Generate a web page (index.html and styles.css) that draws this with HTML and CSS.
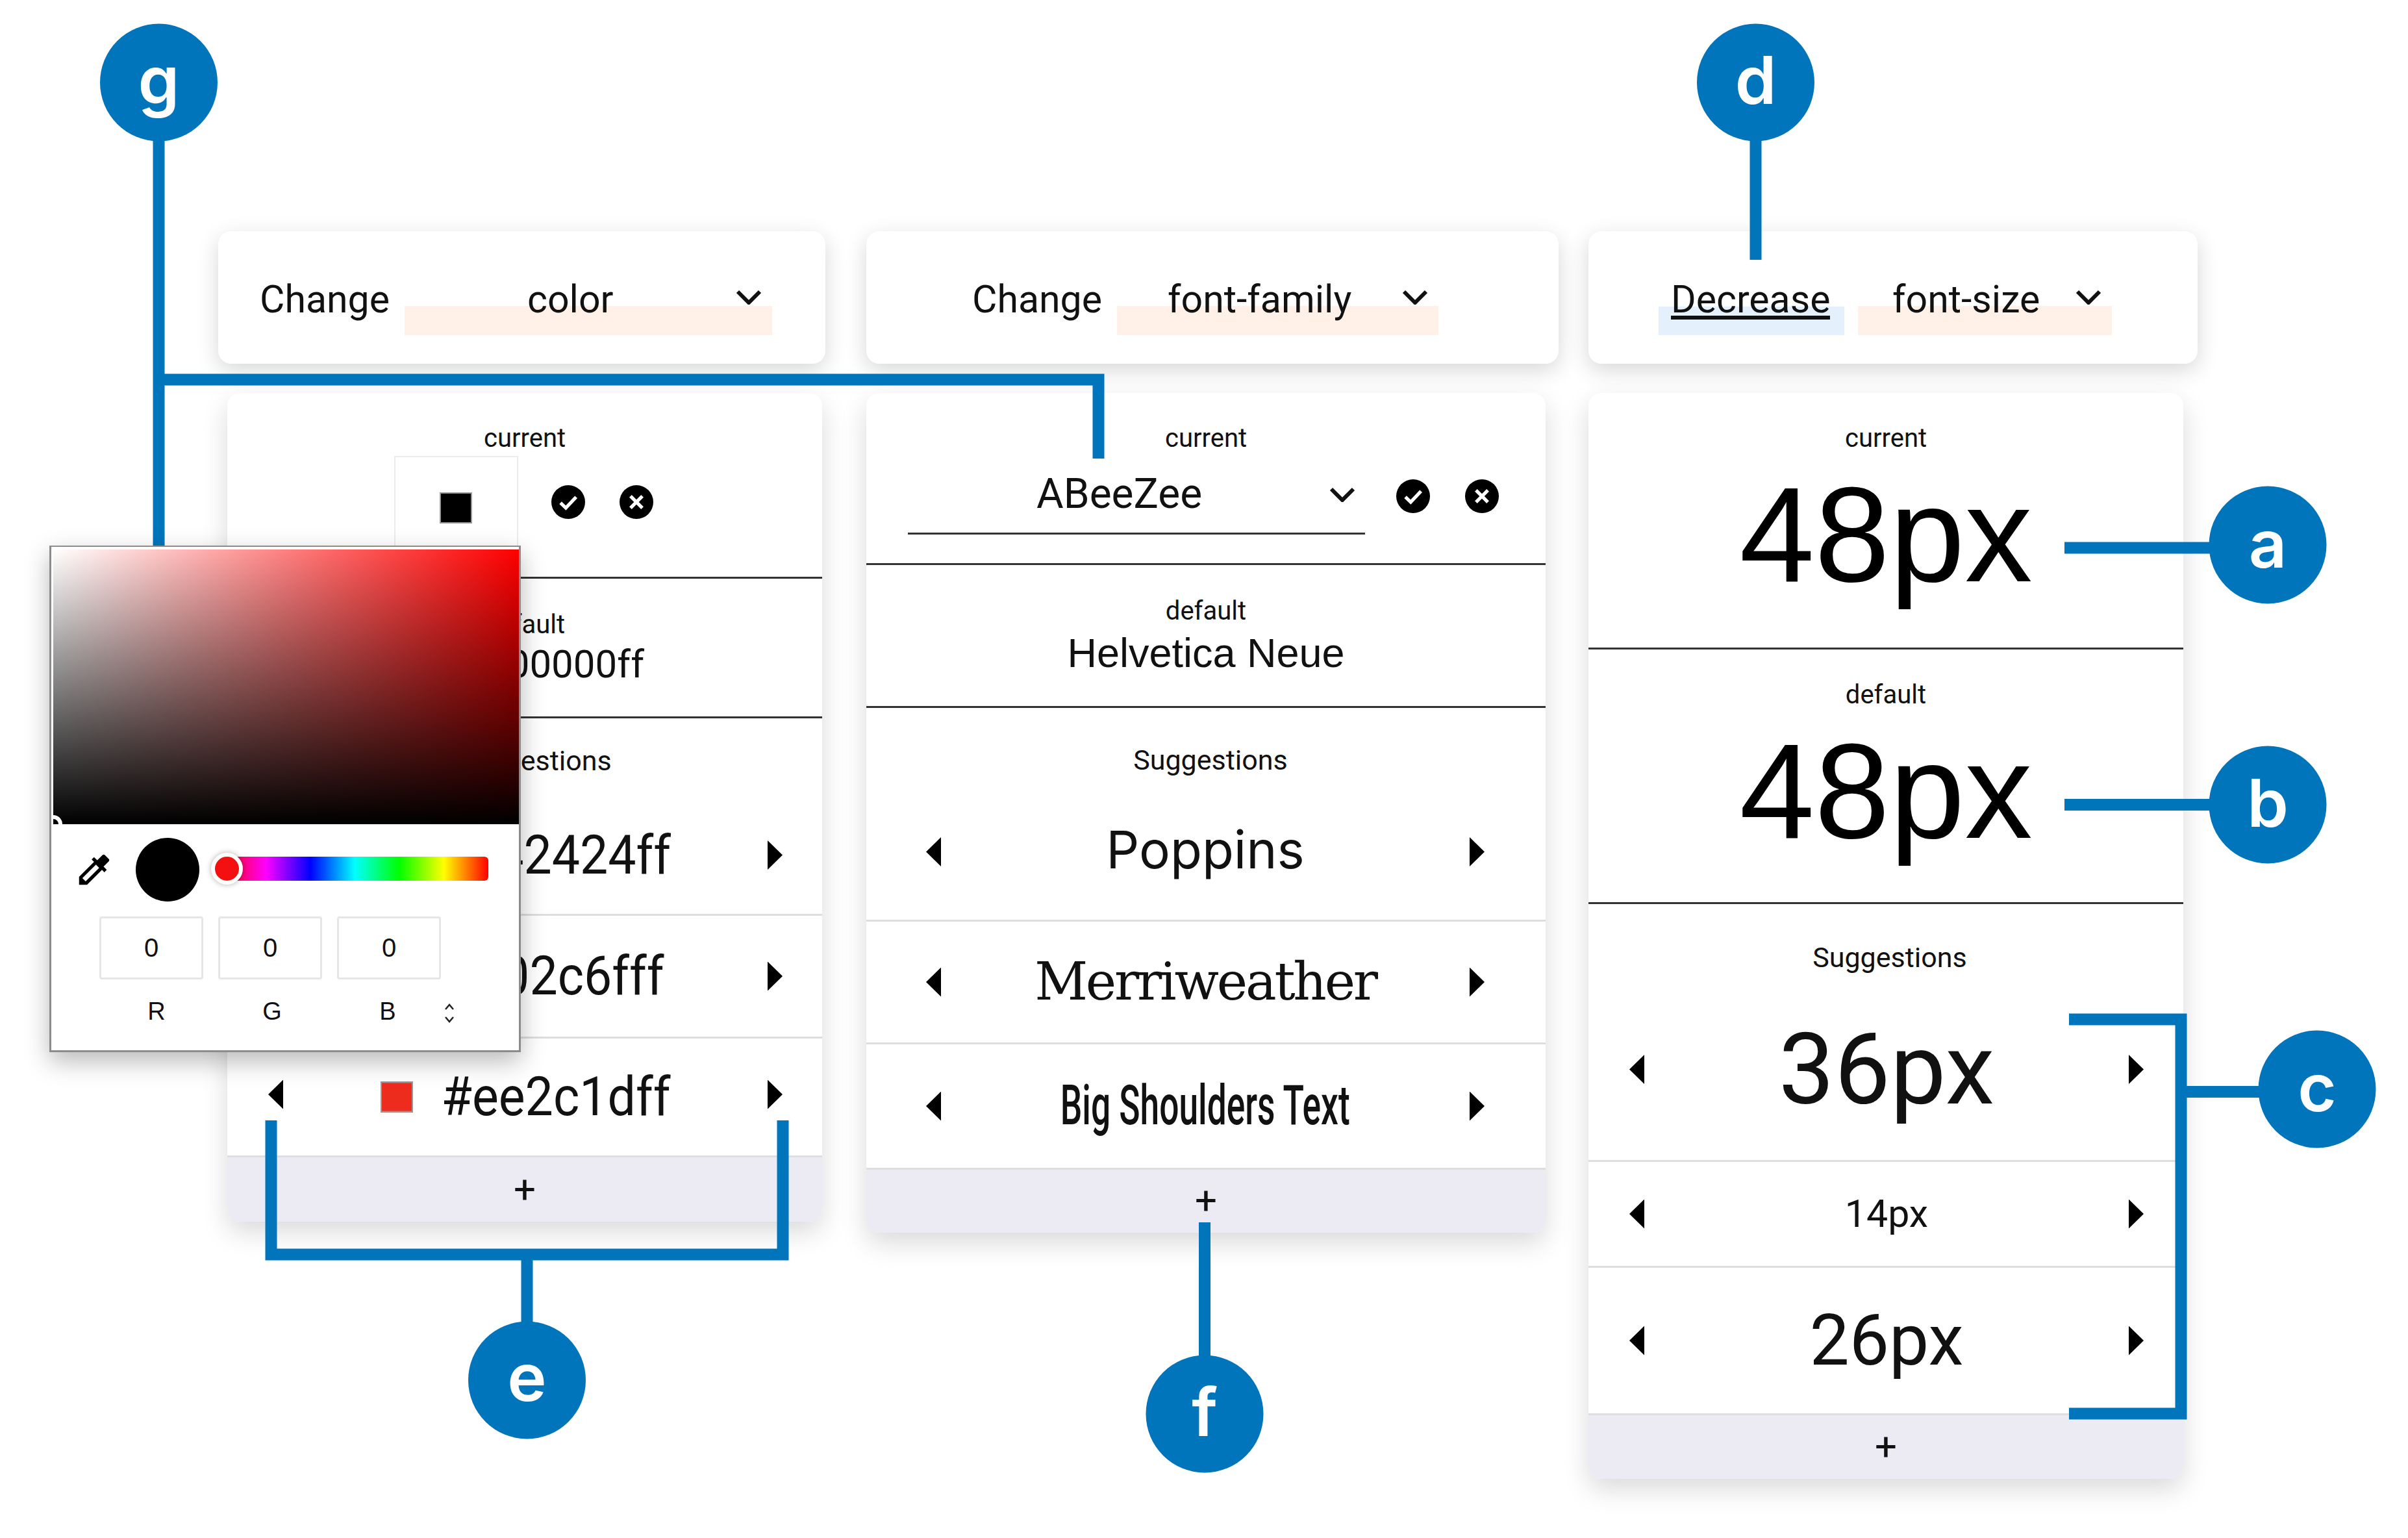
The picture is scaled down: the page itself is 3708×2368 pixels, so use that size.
FILE: index.html
```html
<!DOCTYPE html>
<html lang="en">
<head>
  <meta charset="UTF-8">
  <title>Style suggestion widgets</title>
  <link rel="stylesheet" href="styles.css">
</head>
<body>
  <div class="board">

    <!-- color column -->
    <div class="col col-color">
      <div class="bar bar-color">
        <span class="bar-label">Change</span>
        <div class="pick pick-color"><span>color</span><svg class="chev" viewBox="0 0 40 24"><polyline points="3,4 20,21 37,4"/></svg></div>
      </div>
      <div class="panel">
        <div class="sect sect-cur">
          <div class="cap">current</div>
          <div class="cur-color">
            <div class="swatch-box"><span class="swatch swatch-black"></span></div>
            <svg class="round-btn" viewBox="0 0 24 24"><circle cx="12" cy="12" r="12"/><polyline points="6.5,12.5 10.3,16.2 17.6,8.4"/></svg>
            <svg class="round-btn" viewBox="0 0 24 24"><circle cx="12" cy="12" r="12"/><path d="M7.8 7.8l8.4 8.4M16.2 7.8l-8.4 8.4"/></svg>
          </div>
        </div>
        <div class="sect sect-def">
          <div class="cap">default</div>
          <div class="def-val"><span class="swatch swatch-black"></span>#000000ff</div>
        </div>
        <div class="cap-sug">Suggestions</div>
        <div class="row row-c1"><i class="arrow left"></i><div class="val"><span class="swatch" style="background:#f42424"></span>#f42424ff</div><i class="arrow right"></i></div>
        <div class="row row-c2"><i class="arrow left"></i><div class="val"><span class="swatch" style="background:#002c6f"></span>#002c6fff</div><i class="arrow right"></i></div>
        <div class="row row-c3"><i class="arrow left"></i><div class="val"><span class="swatch" style="background:#ee2c1d"></span>#ee2c1dff</div><i class="arrow right"></i></div>
        <div class="add">+</div>
      </div>
    </div>

    <!-- font-family column -->
    <div class="col col-family">
      <div class="bar bar-family">
        <span class="bar-label">Change</span>
        <div class="pick pick-family"><span>font-family</span><svg class="chev" viewBox="0 0 40 24"><polyline points="3,4 20,21 37,4"/></svg></div>
      </div>
      <div class="panel">
        <div class="sect sect-cur">
          <div class="cap">current</div>
          <div class="cur-family">
            <div class="select"><span>ABeeZee</span><svg class="chev" viewBox="0 0 40 24"><polyline points="3,4 20,21 37,4"/></svg></div>
            <svg class="round-btn" viewBox="0 0 24 24"><circle cx="12" cy="12" r="12"/><polyline points="6.5,12.5 10.3,16.2 17.6,8.4"/></svg>
            <svg class="round-btn" viewBox="0 0 24 24"><circle cx="12" cy="12" r="12"/><path d="M7.8 7.8l8.4 8.4M16.2 7.8l-8.4 8.4"/></svg>
          </div>
        </div>
        <div class="sect sect-def">
          <div class="cap">default</div>
          <div class="def-family">Helvetica Neue</div>
        </div>
        <div class="cap-sug">Suggestions</div>
        <div class="row row-f1"><i class="arrow left"></i><div class="val font-poppins">Poppins</div><i class="arrow right"></i></div>
        <div class="row row-f2"><i class="arrow left"></i><div class="val font-merri">Merriweather</div><i class="arrow right"></i></div>
        <div class="row row-f3"><i class="arrow left"></i><div class="val"><span class="font-big">Big Shoulders Text</span></div><i class="arrow right"></i></div>
        <div class="add">+</div>
      </div>
    </div>

    <!-- font-size column -->
    <div class="col col-size">
      <div class="bar bar-size">
        <div class="pick pick-action"><span class="under">Decrease</span></div>
        <div class="pick pick-size"><span>font-size</span><svg class="chev" viewBox="0 0 40 24"><polyline points="3,4 20,21 37,4"/></svg></div>
      </div>
      <div class="panel">
        <div class="sect sect-cur">
          <div class="cap">current</div>
          <div class="big-val">48px</div>
        </div>
        <div class="sect sect-def">
          <div class="cap">default</div>
          <div class="big-val">48px</div>
        </div>
        <div class="cap-sug">Suggestions</div>
        <div class="row row-s1"><i class="arrow left"></i><div class="val">36px</div><i class="arrow right"></i></div>
        <div class="row row-s2"><i class="arrow left"></i><div class="val">14px</div><i class="arrow right"></i></div>
        <div class="row row-s3"><i class="arrow left"></i><div class="val">26px</div><i class="arrow right"></i></div>
        <div class="add">+</div>
      </div>
    </div>

    <!-- callouts -->
    <svg class="callouts" viewBox="0 0 3708 2368">
      <path d="M244.5 127V840M244.5 584.500H1691.500V706"/>
      <path d="M2703.500 127V400"/>
      <path d="M3179 843.500H3492"/>
      <path d="M3179 1239H3492"/>
      <path d="M3186 1569.500H3358.500V2176.500H3186M3358.500 1681H3568"/>
      <path d="M417.500 1725V1931.500H1205.500V1725M811.500 1931.500V2125"/>
      <path d="M1855 1882V2177"/>
      <circle cx="244.500" cy="127" r="90.500"/><text x="244.500" y="160">g</text>
      <circle cx="2703.500" cy="127" r="90.500"/><text x="2703.500" y="160">d</text>
      <circle cx="3492" cy="839" r="90.500"/><text x="3492" y="874">a</text>
      <circle cx="3492" cy="1239" r="90.500"/><text x="3492" y="1273">b</text>
      <circle cx="3568" cy="1677" r="90.500"/><text x="3568" y="1711">c</text>
      <circle cx="811.500" cy="2125" r="90.500"/><text x="811.500" y="2157">e</text>
      <circle cx="1855" cy="2177" r="90.500"/><text x="1855" y="2211">f</text>
    </svg>

    <!-- color picker popup -->
    <div class="picker">
      <div class="sv"><span class="sv-dot"></span></div>
      <div class="pick-tools">
        <svg class="dropper" viewBox="0 0 24 24"><path d="M20.71 5.63l-2.34-2.34c-.39-.39-1.02-.39-1.41 0l-3.12 3.12-1.93-1.91-1.41 1.41 1.42 1.42L3 16.25V21h4.75l8.92-8.92 1.42 1.42 1.41-1.41-1.92-1.92 3.12-3.12c.4-.4.4-1.03.01-1.42zM6.92 19L5 17.08l8.06-8.06 1.92 1.92L6.92 19z"/></svg>
        <span class="pick-preview"></span>
        <div class="hue"><span class="hue-thumb"></span></div>
      </div>
      <div class="rgb-inputs">
        <div class="rgb-box">0</div>
        <div class="rgb-box">0</div>
        <div class="rgb-box">0</div>
      </div>
      <div class="rgb-labels">
        <span>R</span><span>G</span><span>B</span>
        <svg class="stepper" viewBox="0 0 16 36"><polyline points="2,12 8,5 14,12"/><polyline points="2,24 8,31 14,24"/></svg>
      </div>
    </div>

  </div>
</body>
</html>
```

FILE: styles.css
```css
/* General Styles */
html, body {
  margin: 0;
  padding: 0;
  background: #fff;
  color: #111;
  font-family: Roboto, sans-serif;
}

.board {
  position: relative;
  display: flex;
  align-items: flex-start;
  box-sizing: border-box;
  width: 3708px;
  height: 2368px;
  padding: 356px 0 0 336px;
  overflow: hidden;
}

.col-color { width: 935px; margin-right: 63px; }
.col-family { width: 1066px; margin-right: 46px; }
.col-size { width: 938px; }

/* Top sentence bars */
.bar {
  display: flex;
  align-items: flex-start;
  box-sizing: border-box;
  height: 204px;
  padding-top: 65px;
  background: #fff;
  border-radius: 20px;
  box-shadow: 0 10px 34px rgba(0, 0, 0, 0.16);
  font-size: 59px;
  line-height: 80px;
}

.bar-color { padding-left: 64px; gap: 23px; }
.bar-family { padding-left: 163px; gap: 23px; }
.bar-size { padding-left: 108px; gap: 21px; }

.pick {
  display: flex;
  justify-content: space-between;
  align-items: flex-start;
  box-sizing: border-box;
  height: 95px;
  padding-right: 16px;
  background: linear-gradient(transparent 53%, #fff1e7 53%);
}

.pick-color { width: 566px; padding-left: 189px; }
.pick-family { width: 495px; padding-left: 78px; }
.pick-size { width: 391px; padding-left: 53px; }
.pick-action {
  width: 286px;
  padding-left: 19px;
  background: linear-gradient(transparent 54%, #e4f1fc 54%);
}

.under {
  display: inline-block;
  height: 65px;
  border-bottom: 6px solid #111;
}

.chev {
  width: 40px;
  height: 24px;
  margin-top: 24px;
  fill: none;
  stroke: #111;
  stroke-width: 6;
}

/* Panels */
.panel {
  display: flex;
  flex-direction: column;
  margin: 45px 0 0 14px;
  background: #fff;
  border-radius: 20px;
  box-shadow: 0 16px 40px rgba(0, 0, 0, 0.15);
  overflow: hidden;
}

.col-color .panel { width: 916px; }
.col-family .panel { width: 1046px; margin-left: 0; }
.col-size .panel { width: 916px; margin-left: 0; }

.sect {
  box-sizing: border-box;
  padding-top: 42px;
  border-bottom: 3px solid #333;
  text-align: center;
}

.col-color .sect-cur { height: 286px; }
.col-color .sect-def { height: 215px; padding-top: 43px; }
.col-family .sect-cur { height: 265px; }
.col-family .sect-def { height: 220px; padding-top: 43px; }
.col-size .sect-cur { height: 395px; }
.col-size .sect-def { height: 392px; padding-top: 42px; }

.cap {
  font-size: 40px;
  line-height: 56px;
}

.cap-sug {
  font-size: 43px;
  line-height: 56px;
  text-align: center;
  padding-left: 26px;
}

.col-color .cap-sug { height: 120px; padding-top: 37px; padding-left: 30px; box-sizing: border-box; }
.col-family .cap-sug { height: 117px; padding-top: 52px; box-sizing: border-box; padding-left: 14px; }
.col-size .cap-sug { height: 115px; padding-top: 54px; box-sizing: border-box; padding-left: 12px; }

.swatch {
  display: inline-block;
  box-sizing: border-box;
  width: 50px;
  height: 48px;
  margin-right: 44px;
  border: 2px solid #999;
}

.swatch-black { background: #000; }

.cur-color {
  display: flex;
  align-items: center;
  padding-left: 257px;
  margin-top: -1px;
}

.swatch-box {
  display: flex;
  align-items: center;
  justify-content: center;
  box-sizing: border-box;
  width: 191px;
  height: 160px;
  margin-right: 51px;
  border: 2px solid #ececec;
}

.swatch-box .swatch { margin-right: 2px; }

.round-btn {
  width: 52px;
  height: 52px;
  margin-bottom: 18px;
}

.round-btn + .round-btn { margin-left: 53px; }

.round-btn circle { fill: #000; }

.round-btn polyline, .round-btn path {
  fill: none;
  stroke: #fff;
  stroke-width: 2.4;
}

.cur-family {
  display: flex;
  align-items: flex-start;
  padding-left: 64px;
  margin-top: 10px;
}

.select {
  display: flex;
  justify-content: space-between;
  box-sizing: border-box;
  width: 704px;
  height: 110px;
  padding: 10px 15px 0 198px;
  margin-right: 48px;
  border-bottom: 3px solid #333;
  font-size: 64px;
  line-height: 76px;
}

.select .chev { margin-top: 26px; }

.cur-family .round-btn { margin: 25px 0 0; }
.cur-family .round-btn + .round-btn { margin-left: 54px; }

.def-val {
  font-size: 60px;
  line-height: 70px;
  margin-top: -2px;
}

.def-val .swatch { vertical-align: -4px; margin-right: 37px; }

.def-family {
  font-family: "Liberation Sans", sans-serif;
  font-size: 63px;
  line-height: 72px;
  margin-top: 0;
}

.big-val {
  font-family: "Liberation Sans", sans-serif;
  font-size: 208px;
  line-height: 208px;
  color: #000;
  margin-top: 16px;
}

/* Suggestion rows */
.row {
  display: flex;
  align-items: center;
  box-sizing: border-box;
  padding: 0 61px 0 63px;
  border-bottom: 3px solid #dedede;
}

.col-family .row { padding: 0 94px 0 92px; }

.row-c1 { height: 184px; }
.row-c2 { height: 189px; }
.row-c3 { height: 183px; }
.row-f1 { height: 212px; }
.row-f2 { height: 189px; }
.row-f3 { height: 193px; }
.row-s1 { height: 282px; }
.row-s2 { height: 163px; }
.row-s3 { height: 227px; }

.val {
  flex: 1;
  text-align: center;
  font-size: 77px;
  line-height: 90px;
  white-space: nowrap;
}

.val .swatch { height: 44px; vertical-align: 4px; }

.row-c1 .val, .row-c2 .val, .row-c3 .val { transform: scaleY(1.08); }

.row-c1 .val { padding-left: 10px; }
.row-c2 .val { padding-right: 8px; }
.row-c3 .arrow { margin-bottom: 8px; }

.arrow {
  flex: none;
  width: 23px;
  height: 45px;
  background: #000;
}

.arrow.left { clip-path: polygon(100% 0, 0 50%, 100% 100%); }
.arrow.right { clip-path: polygon(0 0, 100% 50%, 0 100%); }

.font-poppins { font-family: Inter, sans-serif; font-size: 80px; padding-bottom: 8px; }
.font-merri {
  font-family: "DejaVu Serif", serif;
  font-size: 80px;
  letter-spacing: -3.2px;
}
.font-big {
  display: inline-block;
  font-size: 85px;
  font-weight: 500;
  transform: scaleX(0.627);
}

.row-s1 .val { font-size: 153px; line-height: 170px; }
.row-s2 .val { font-size: 59px; }
.row-s3 .val { font-size: 109px; line-height: 130px; }

.add {
  height: 99px;
  background: #ecebf4;
  text-align: center;
  font-size: 60px;
  line-height: 99px;
}

.col-size .add { height: 98px; line-height: 98px; }
.col-family .add { height: 97px; line-height: 95px; }

/* Blue callouts */
.callouts {
  position: absolute;
  top: 0;
  left: 0;
  width: 3708px;
  height: 2368px;
}

.callouts path {
  fill: none;
  stroke: #0175bc;
  stroke-width: 18;
}

.callouts circle { fill: #0175bc; }

.callouts text {
  fill: #fff;
  font-family: Inter, sans-serif;
  font-size: 102px;
  font-weight: 600;
  text-anchor: middle;
}

/* Color picker popup */
.picker {
  position: absolute;
  top: 840px;
  left: 76px;
  box-sizing: border-box;
  width: 726px;
  height: 780px;
  padding: 4px 0 0 3px;
  background: #fff;
  border: 3px solid #8c8c8c;
  border-top-width: 2px;
  box-shadow: 0 14px 36px rgba(0, 0, 0, 0.28);
  font-family: "Liberation Sans", sans-serif;
}

.sv {
  position: relative;
  width: 717px;
  height: 423px;
  overflow: hidden;
  background: linear-gradient(to top, #000, transparent), linear-gradient(to right, #fff, #f00);
}

.sv-dot {
  position: absolute;
  left: -14px;
  bottom: -14px;
  width: 16px;
  height: 16px;
  border: 6px solid #fff;
  border-radius: 50%;
}

.pick-tools {
  display: flex;
  align-items: center;
  height: 100px;
  margin-top: 20px;
  padding-left: 32px;
}

.dropper { width: 62px; height: 62px; }

.pick-preview {
  width: 98px;
  height: 98px;
  margin-left: 33px;
  background: #000;
  border-radius: 50%;
}

.hue {
  position: relative;
  width: 411px;
  height: 37px;
  margin: -4px 0 0 34px;
  border-radius: 0 6px 6px 0;
  background: linear-gradient(to right, #f00, #f0f 16.6%, #00f 33.3%, #0ff 50%, #0f0 66.6%, #ff0 83.3%, #f00);
}

.hue-thumb {
  position: absolute;
  top: -6px;
  left: -16px;
  width: 37px;
  height: 37px;
  border: 6px solid #fff;
  border-radius: 50%;
  background: #f41010;
  box-shadow: 0 0 8px rgba(0, 0, 0, 0.3);
}

.rgb-inputs {
  display: flex;
  gap: 23px;
  margin: 22px 0 0 71px;
}

.rgb-box {
  box-sizing: border-box;
  width: 160px;
  height: 97px;
  border: 3px solid #e6e6e6;
  border-radius: 4px;
  text-align: center;
  font-size: 40px;
  line-height: 91px;
}

.rgb-labels {
  display: flex;
  align-items: center;
  height: 60px;
  margin: 19px 0 0 70px;
  font-size: 38px;
}

.rgb-labels span {
  width: 178px;
  text-align: center;
}

.stepper {
  width: 16px;
  height: 36px;
  margin: 6px 0 0 -2px;
  fill: none;
  stroke: #222;
  stroke-width: 2.5;
}
```
